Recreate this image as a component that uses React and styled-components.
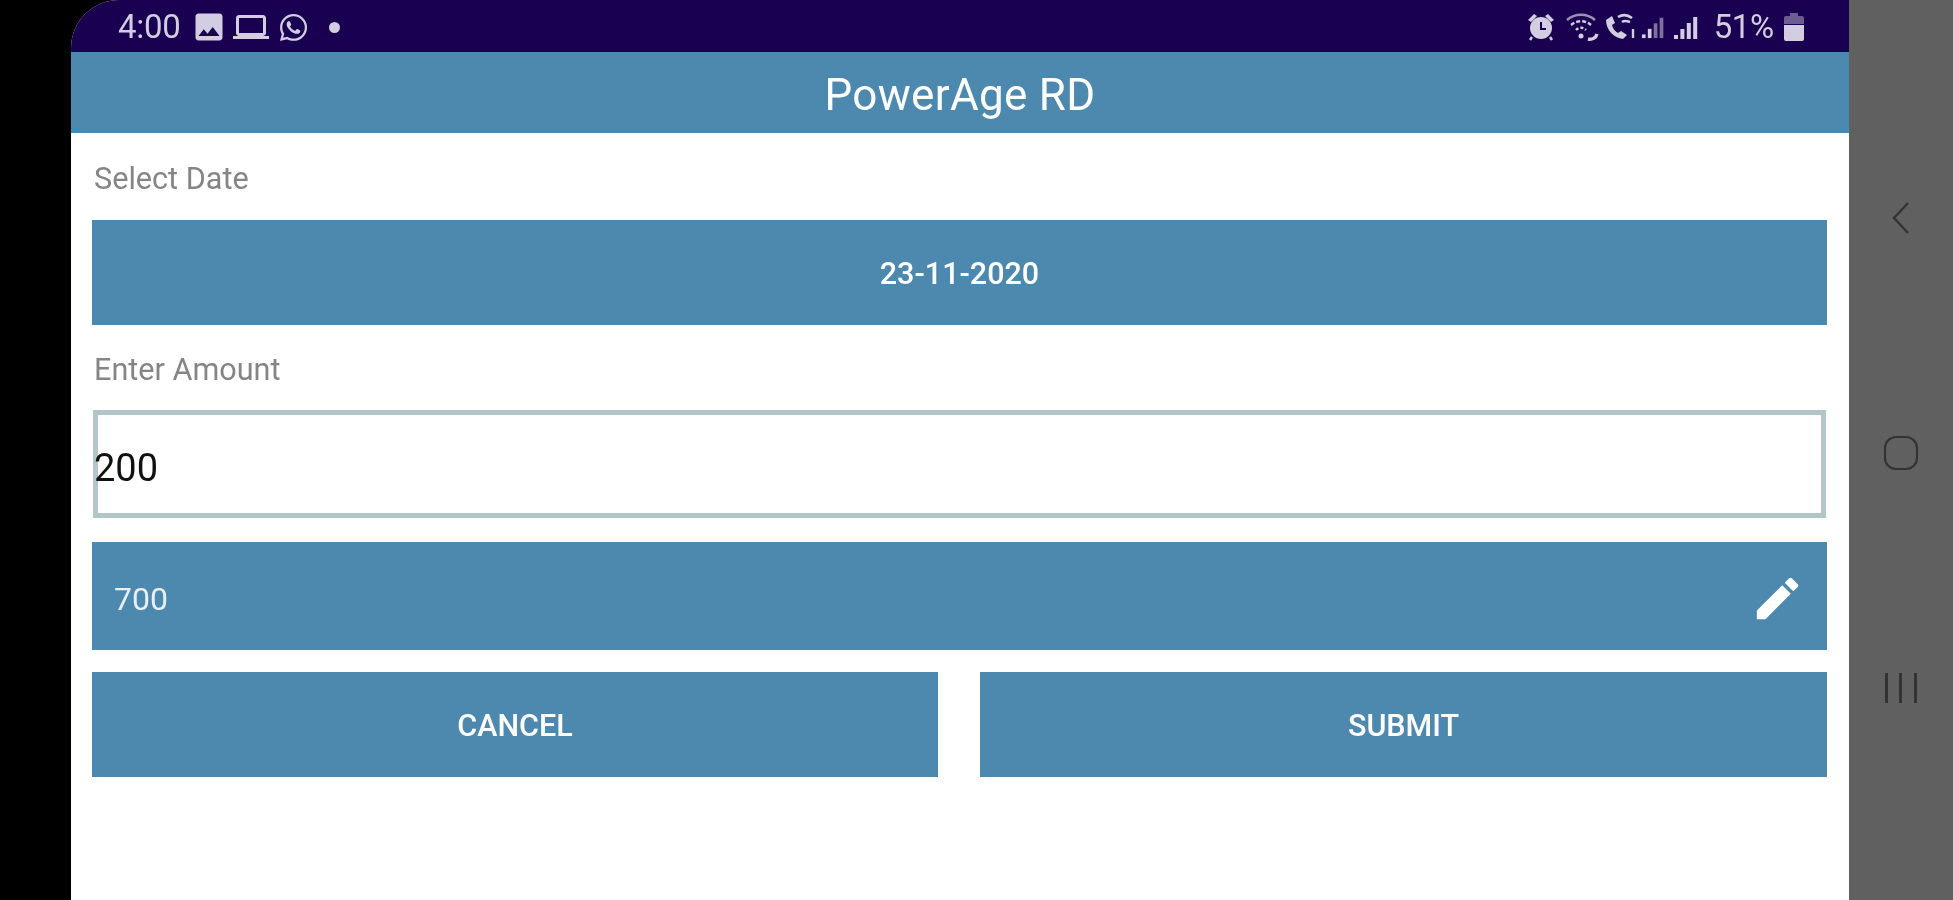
import React from "react";
import styled, { createGlobalStyle } from "styled-components";
import { MdImage, MdLaptop, MdEdit } from "react-icons/md";
import { FaWhatsapp } from "react-icons/fa";

const GlobalStyle = createGlobalStyle`
  html, body {
    margin: 0;
    padding: 0;
    background: #000;
  }
  body {
    font-family: Roboto, "Liberation Sans", sans-serif;
  }
`;

const Screen = styled.div`
  display: flex;
  width: 1953px;
  height: 900px;
  overflow: hidden;
  background: #000;
`;

const Phone = styled.div`
  width: 1778px;
  margin-left: 71px;
  height: 900px;
  background: #fff;
  border-top-left-radius: 48px;
  overflow: hidden;
`;

const StatusBar = styled.div`
  height: 52px;
  background: #1a0050;
  color: #d2cde0;
  display: flex;
  align-items: center;
  justify-content: space-between;
  padding: 2px 44px 0 47px;
  box-sizing: border-box;
  filter: blur(0.7px);
`;

const StatusGroup = styled.div`
  display: flex;
  align-items: center;
`;

const StatusIcon = styled.span`
  display: flex;
  margin-left: ${(p) => p.$gap || 0}px;
`;

const StatusText = styled.span`
  font-size: 33px;
  letter-spacing: -0.3px;
  line-height: 48px;
  margin: ${(p) => p.$margin || "0"};
`;

const Dot = styled.span`
  width: 11px;
  height: 11px;
  border-radius: 50%;
  background: #d2cde0;
  margin-left: 20px;
`;

const AppBar = styled.div`
  height: 81px;
  box-sizing: border-box;
  padding-top: 4px;
  background: #4d88af;
  color: #fff;
  display: flex;
  align-items: center;
  justify-content: center;
  font-size: 44px;
  letter-spacing: 0.3px;
  filter: blur(0.5px);
`;

const Content = styled.div`
  padding: 0 22px 0 21px;
`;

const FieldLabel = styled.div`
  height: ${(p) => p.$height}px;
  box-sizing: border-box;
  padding: 4px 0 0 2px;
  display: flex;
  align-items: center;
  color: #858585;
  font-size: 30.6px;
  filter: blur(0.7px);
`;

const BlueBar = styled.div`
  height: 105px;
  box-sizing: border-box;
  padding-top: 2px;
  background: #4d88af;
  color: #fff;
  display: flex;
  align-items: center;
  justify-content: center;
  font-size: 30.5px;
  font-weight: 500;
`;

const BarText = styled.span`
  filter: blur(0.7px);
`;

const AmountField = styled.div`
  height: 108px;
  box-sizing: border-box;
  margin: 0 1px;
  padding-top: 8px;
  border: 5px solid #b2c5c9;
  display: flex;
  align-items: center;
  color: #111;
  font-size: 38px;
`;

const AmountValue = styled.span`
  margin-left: -4px;
  filter: blur(0.7px);
`;

const TotalRow = styled.div`
  height: 108px;
  box-sizing: border-box;
  margin-top: 24px;
  padding: 5px 22px 0 22px;
  background: #4d88af;
  color: #e8f0f5;
  display: flex;
  align-items: center;
  justify-content: space-between;
  font-size: 32px;
`;

const ButtonRow = styled.div`
  margin-top: 22px;
  display: grid;
  grid-template-columns: 846px 847px;
  column-gap: 42px;
`;

const NavBar = styled.div`
  flex: 1;
  height: 900px;
  background: #606060;
  padding-top: 100px;
  box-sizing: border-box;
  display: flex;
  flex-direction: column;
  align-items: center;
`;

const NavSlot = styled.div`
  height: 235px;
  flex: none;
  display: flex;
  align-items: center;
  justify-content: center;
  color: #333;
  filter: blur(0.4px);
`;

const AlarmIcon = () => (
  <svg width="28" height="28" viewBox="0 0 28 28">
    <path d="M1 7 7 1l3 2-6 6zM27 7l-6-6-3 2 6 6z" fill="currentColor" />
    <circle cx="14" cy="15" r="11" fill="currentColor" />
    <path d="M14 9v7h5" fill="none" stroke="#1a0050" strokeWidth="2" />
    <path d="M5 24 3 27M23 24l2 3" stroke="currentColor" strokeWidth="2.5" />
  </svg>
);

const WifiCallIcon = () => (
  <svg width="33" height="30" viewBox="0 0 33 30" fill="none" stroke="currentColor" strokeWidth="2.4">
    <path d="M1 8c8-7 20-7 28 0" opacity="0.7" />
    <path d="M5 13c6-5 14-5 20 0" strokeDasharray="4 2" />
    <path d="M10 18c3-3 7-3 10 0" strokeDasharray="3 2" />
    <circle cx="15" cy="24" r="2.5" fill="currentColor" stroke="none" />
    <path d="M22 27c4 1 8-1 9-5" strokeWidth="3.4" />
  </svg>
);

const CallIcon = () => (
  <svg width="33" height="30" viewBox="0 0 33 30" fill="none" stroke="currentColor">
    <path d="M2 8c0 10 8 18 17 19l4-4-6-4-3 2c-3-2-5-4-6-8l3-2-3-7z" fill="currentColor" stroke="none" />
    <path d="M14 5c5-3 10-2 14 1" strokeWidth="2.6" />
    <path d="M18 10c3-2 5-1 8 0" strokeWidth="2.6" />
    <path d="M29 17v9" strokeWidth="2.4" />
  </svg>
);

const SignalIcon = ({ level, width }) => (
  <svg width={width} height="28" viewBox="0 0 26 28" fill="currentColor">
    {[0, 1, 2, 3].map((i) => (
      <rect
        key={i}
        x={i * 6.4 + 1}
        y={22 - i * 6}
        width="4"
        height={4 + i * 6}
        opacity={i < level ? 1 : 0.55}
      />
    ))}
  </svg>
);

const BatteryIcon = () => (
  <svg width="22" height="30" viewBox="0 0 22 30" fill="currentColor">
    <path d="M7 1h8v3h4a2 2 0 0 1 2 2v6H1V6a2 2 0 0 1 2-2h4z" opacity="0.45" />
    <path d="M1 13h20v14a2 2 0 0 1-2 2H3a2 2 0 0 1-2-2z" />
  </svg>
);

const NavChevron = () => (
  <svg width="20" height="34" viewBox="0 0 20 34" fill="none" stroke="currentColor" strokeWidth="2.4">
    <path d="M17 2 3 17l14 15" />
  </svg>
);

const NavSquare = () => (
  <svg width="36" height="36" viewBox="0 0 36 36" fill="none" stroke="currentColor" strokeWidth="2.2">
    <rect x="2" y="2" width="32" height="32" rx="11" />
  </svg>
);

const NavLines = () => (
  <svg width="34" height="32" viewBox="0 0 34 32" fill="currentColor">
    <rect x="1" y="1" width="3" height="30" />
    <rect x="15" y="1" width="3" height="30" />
    <rect x="30" y="1" width="3" height="30" />
  </svg>
);

const App = () => (
  <>
    <GlobalStyle />
    <Screen>
      <Phone>
        <StatusBar>
          <StatusGroup>
            <StatusText>4:00</StatusText>
            <StatusIcon $gap={11}>
              <MdImage size={36} />
            </StatusIcon>
            <StatusIcon $gap={6}>
              <MdLaptop size={36} />
            </StatusIcon>
            <StatusIcon $gap={9}>
              <FaWhatsapp size={31} />
            </StatusIcon>
            <Dot />
          </StatusGroup>
          <StatusGroup>
            <AlarmIcon />
            <StatusIcon $gap={11}>
              <WifiCallIcon />
            </StatusIcon>
            <StatusIcon $gap={5}>
              <CallIcon />
            </StatusIcon>
            <StatusIcon $gap={4}>
              <SignalIcon level={2} width={24} />
            </StatusIcon>
            <StatusIcon $gap={8}>
              <SignalIcon level={4} width={26} />
            </StatusIcon>
            <StatusText $margin="0 9px 0 15px">51%</StatusText>
            <BatteryIcon />
          </StatusGroup>
        </StatusBar>
        <AppBar>PowerAge RD</AppBar>
        <Content>
          <FieldLabel $height={87}>Select Date</FieldLabel>
          <BlueBar>
            <BarText>23-11-2020</BarText>
          </BlueBar>
          <FieldLabel $height={85}>Enter Amount</FieldLabel>
          <AmountField>
            <AmountValue>200</AmountValue>
          </AmountField>
          <TotalRow>
            <BarText>700</BarText>
            <MdEdit size={55} color="#fff" />
          </TotalRow>
          <ButtonRow>
            <BlueBar>
              <BarText>CANCEL</BarText>
            </BlueBar>
            <BlueBar>
              <BarText>SUBMIT</BarText>
            </BlueBar>
          </ButtonRow>
        </Content>
      </Phone>
      <NavBar>
        <NavSlot>
          <NavChevron />
        </NavSlot>
        <NavSlot>
          <NavSquare />
        </NavSlot>
        <NavSlot>
          <NavLines />
        </NavSlot>
      </NavBar>
    </Screen>
  </>
);

export default App;
